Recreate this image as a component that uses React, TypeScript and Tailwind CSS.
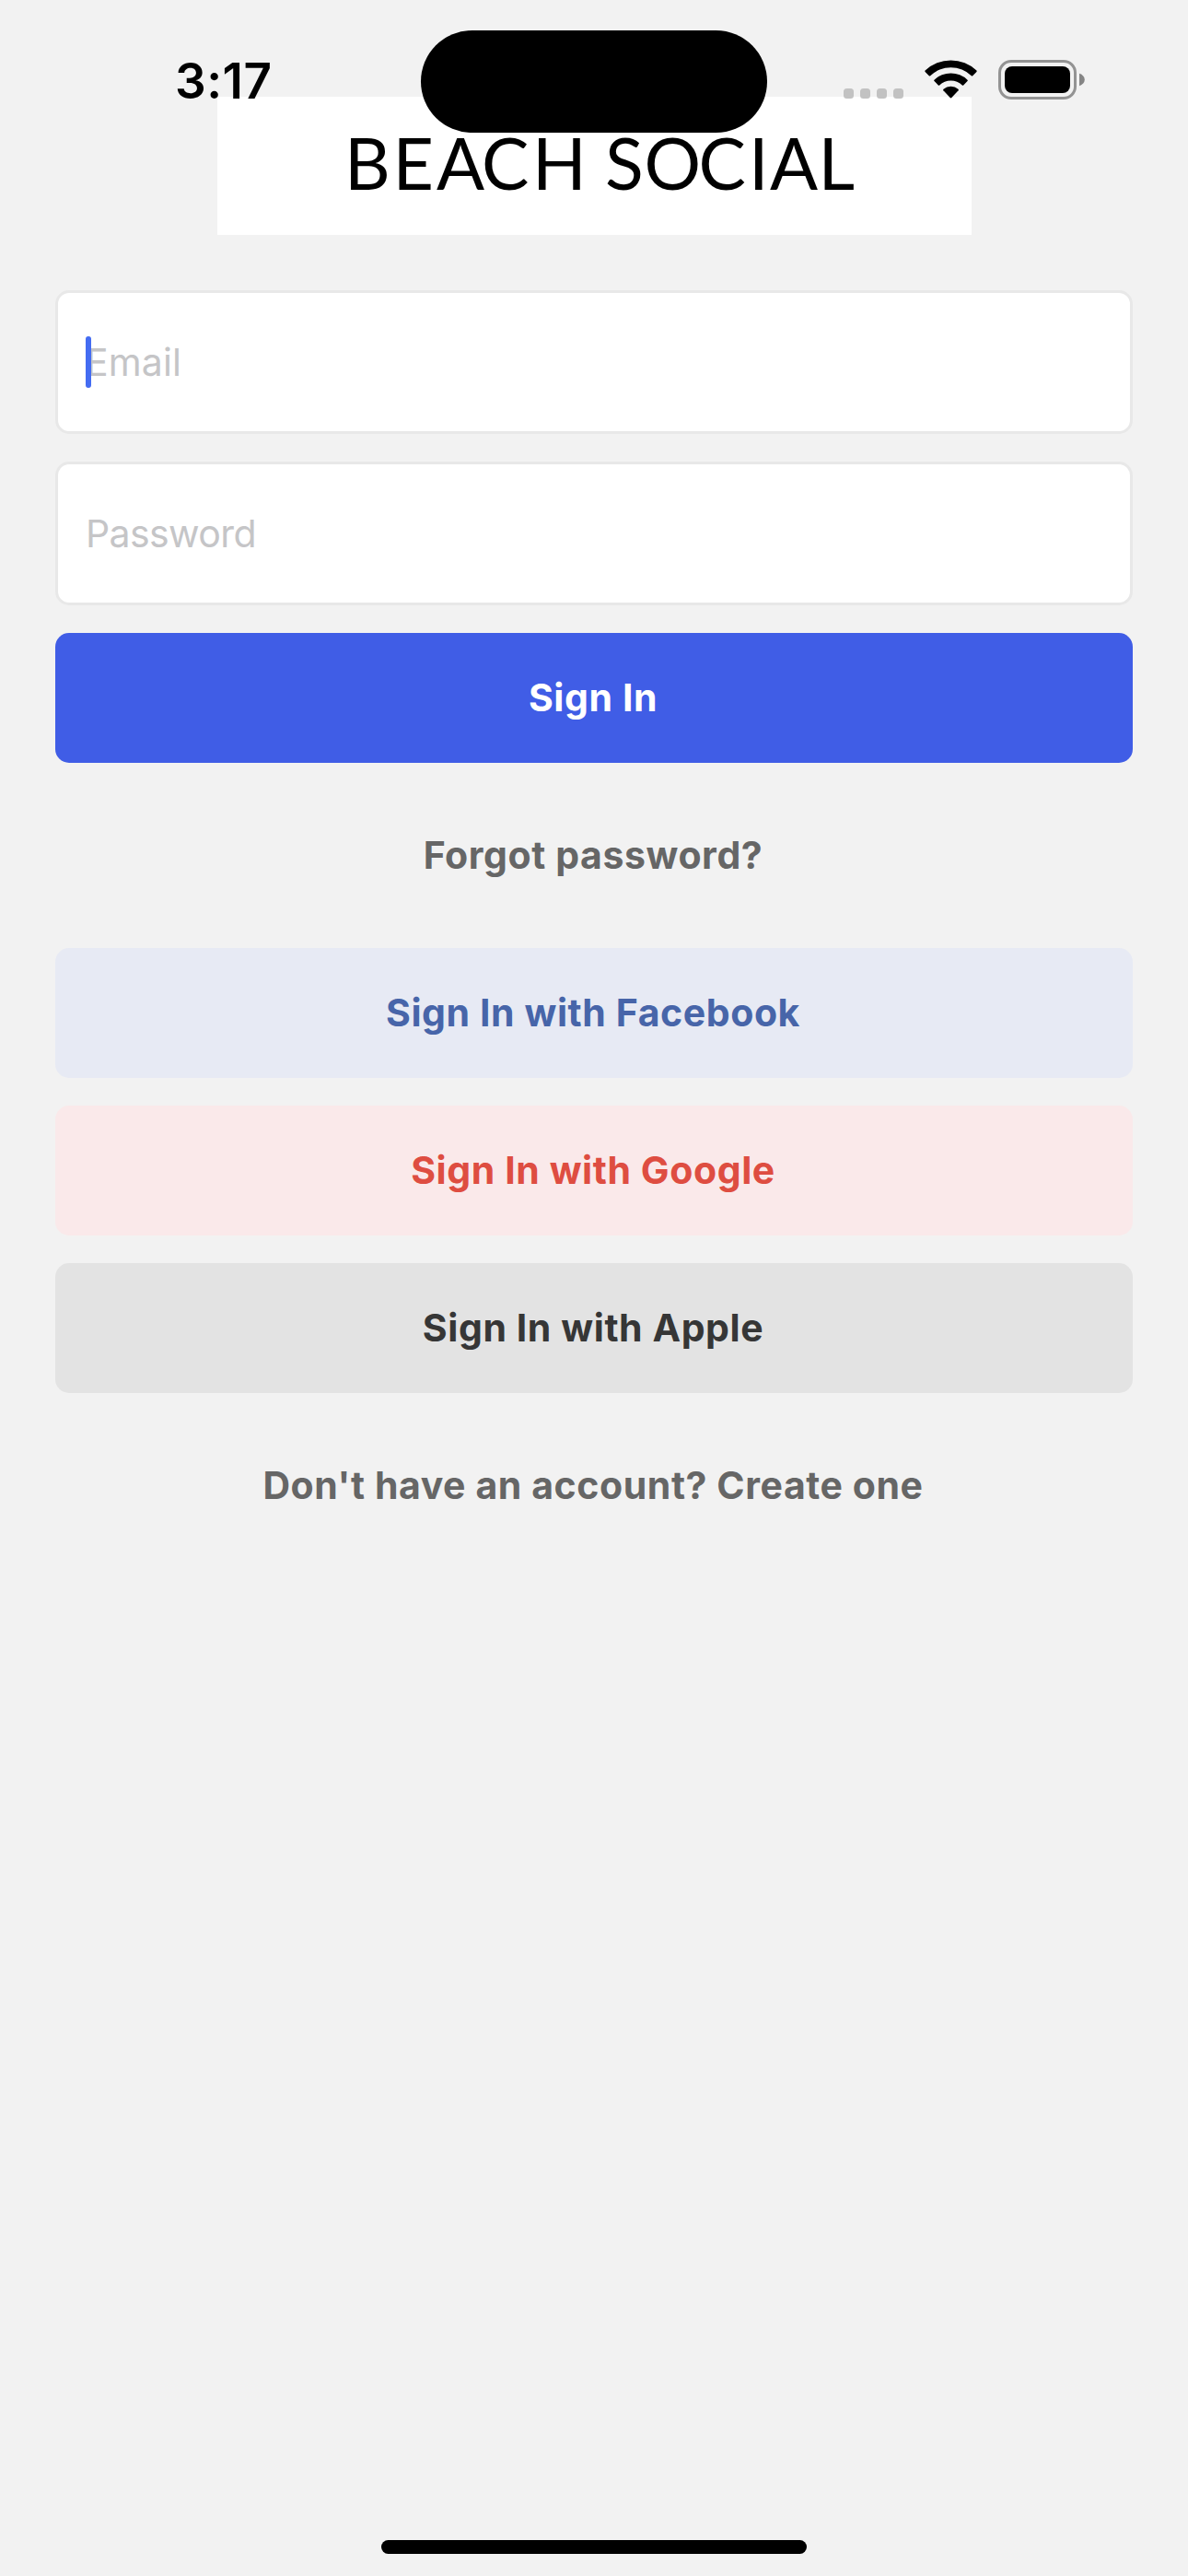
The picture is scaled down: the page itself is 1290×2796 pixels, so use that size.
import type { ReactNode } from 'react';

function StatusBar() {
  return (
    <div className="absolute inset-x-0 top-0 z-10 flex h-[144px] items-start">
      <div className="ml-[190px] mt-[56px] w-[267px] whitespace-nowrap text-[53px] font-semibold leading-[64px] tracking-[0.5px] text-black">
        3:17
      </div>
      <div className="mt-[33px] h-[111px] w-[376px] rounded-full bg-black" />
      <div className="ml-[83px] mt-[96px] flex gap-[7px]">
        {[0, 1, 2, 3].map((i) => (
          <span key={i} className="size-[11px] rounded-[3.5px] bg-[#c2c2c2]" />
        ))}
      </div>
      <svg className="ml-[23px] mt-[65px]" width="57" height="42" viewBox="0 0 57 42" fill="black">
        <path d="M0.6 11.6 A40.5 40.5 0 0 1 56.4 11.6 Q57 12.3 56.4 13 L52.2 17.2 Q51.5 17.9 50.8 17.2 A32.3 32.3 0 0 0 6.2 17.2 Q5.5 17.9 4.8 17.2 L0.6 13 Q0 12.3 0.6 11.6 Z" />
        <path d="M10.5 21.7 A26 26 0 0 1 46.5 21.7 Q47.2 22.4 46.5 23.1 L42.2 27.4 Q41.5 28.1 40.8 27.4 A18 18 0 0 0 16.2 27.4 Q15.5 28.1 14.8 27.4 L10.5 23.1 Q9.8 22.4 10.5 21.7 Z" />
        <path d="M20.5 31.8 A12.4 12.4 0 0 1 36.5 31.8 Q37.3 32.5 36.6 33.3 L29.3 41 Q28.5 41.8 27.7 41 L20.4 33.3 Q19.7 32.5 20.5 31.8 Z" />
      </svg>
      <svg className="ml-[23px] mt-[65px]" width="95" height="43" viewBox="0 0 95 43">
        <rect x="1.5" y="1.5" width="82" height="40" rx="12.5" fill="none" stroke="#939393" strokeWidth="3" />
        <rect x="7" y="7" width="71" height="29" rx="8" fill="black" />
        <path d="M88 14.8 C91.6 16 93.8 18.4 93.8 21.5 C93.8 24.6 91.6 27 88 28.2 Z" fill="#858585" />
      </svg>
    </div>
  );
}

function Logo() {
  return (
    <svg className="block h-[150px] w-[819px] bg-white" viewBox="0 0 819 150">
      <text
        x="138 190.5 238 287 342 400 421 463.5 522.5 577 600 652.5"
        y="101.3"
        fontSize="77"
        fontFamily="Lato, sans-serif"
        fill="black"
      >
        BEACH SOCIAL
      </text>
    </svg>
  );
}

function Field({
  placeholder,
  type,
  tracking,
  focused,
}: {
  placeholder: string;
  type: string;
  tracking: string;
  focused?: boolean;
}) {
  return (
    <div className="relative h-[156px] rounded-[15px] border-[3px] border-[#e8e8e8] bg-white">
      <input
        type={type}
        placeholder={placeholder}
        className={`block h-full w-full bg-transparent px-[30px] text-[41px] text-black outline-none placeholder:text-[#c5c5c7] ${tracking}`}
      />
      {focused && <span className="absolute left-[30px] top-[47px] h-[56px] w-[6px] rounded-full bg-[#446cf2]" />}
    </div>
  );
}

function Button({ className, children }: { className: string; children: ReactNode }) {
  return (
    <button
      className={`flex h-[141px] items-center justify-center rounded-[15px] pr-[2px] text-[41px] font-bold tracking-[0.58px] ${className}`}
    >
      {children}
    </button>
  );
}

export default function App() {
  return (
    <div className="relative flex h-[2796px] w-[1290px] flex-col overflow-hidden bg-[#f2f2f2] font-['Inter',sans-serif]">
      <StatusBar />
      <main className="flex flex-1 flex-col px-[60px] pt-[105px]">
        <div className="ml-[176px]">
          <Logo />
        </div>
        <form className="mt-[60px] flex flex-col gap-[30px]">
          <Field type="text" placeholder="Email" tracking="tracking-[0.1px]" focused />
          <Field type="password" placeholder="Password" tracking="tracking-[-0.6px]" />
          <Button className="bg-[#405de6] text-white">Sign In</Button>
          <Button className="text-[#666666]">Forgot password?</Button>
          <Button className="bg-[#e7eaf4] text-[#4765a9]">Sign In with Facebook</Button>
          <Button className="bg-[#fae9ea] text-[#de4d41]">Sign In with Google</Button>
          <Button className="bg-[#e3e3e3] text-[#363636]">Sign In with Apple</Button>
          <Button className="text-[#666666]">Don't have an account? Create one</Button>
        </form>
      </main>
      <div className="mb-[24px] ml-[414px] h-[15px] w-[462px] rounded-full bg-black" />
    </div>
  );
}
